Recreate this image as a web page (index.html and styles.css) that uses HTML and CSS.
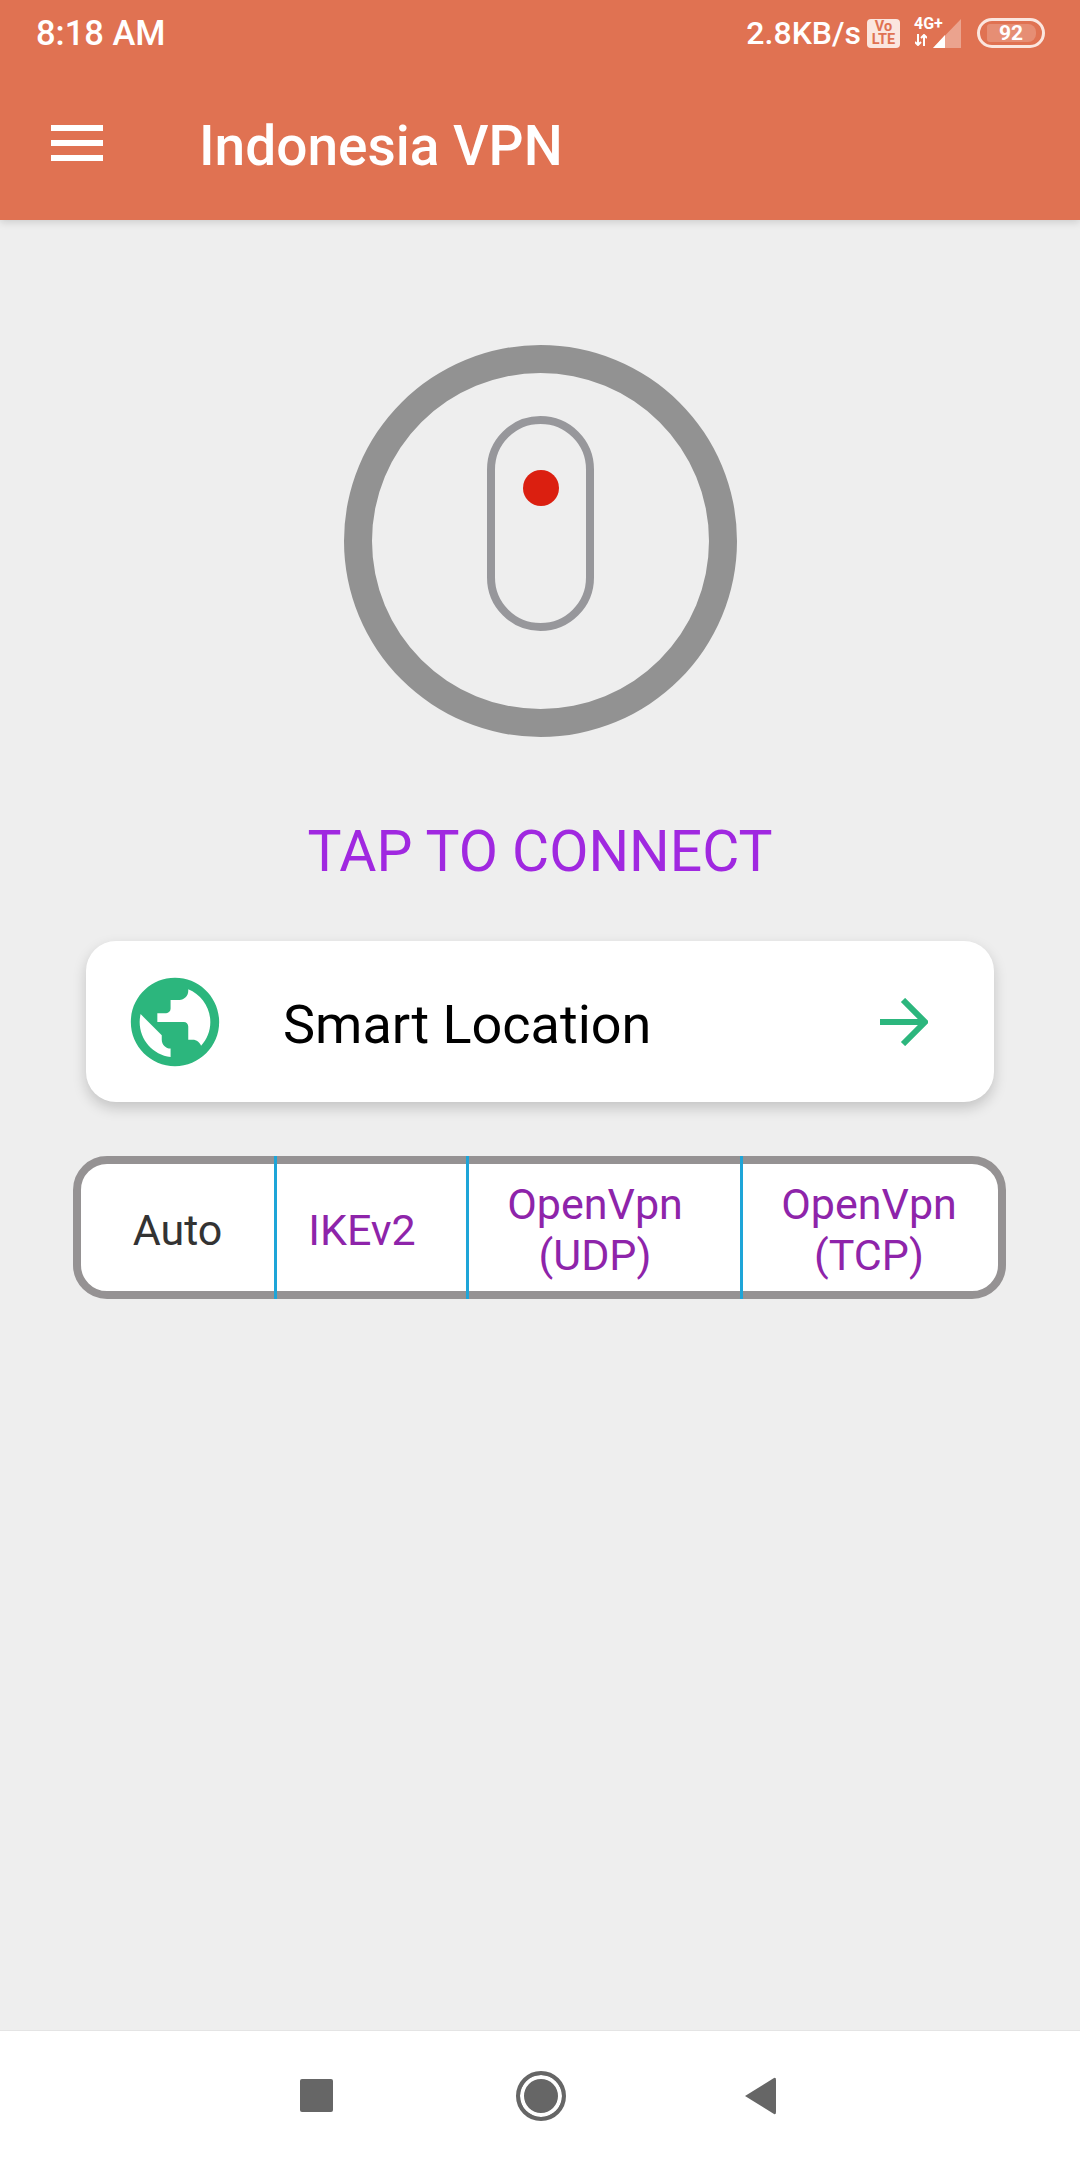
FILE: index.html
```html
<!DOCTYPE html>
<html lang="en">
<head>
  <meta charset="UTF-8">
  <meta name="viewport" content="width=device-width, initial-scale=1.0">
  <title>Indonesia VPN</title>
  <link rel="stylesheet" href="styles.css">
</head>
<body>
  <div class="app">

    <!-- Status bar and toolbar -->
    <header class="topbar">
      <div class="status">
        <span class="clock">8:18 AM</span>
        <div class="status-right">
          <span class="speed">2.8KB/s</span>
          <span class="volte">Vo<br>LTE</span>
          <div class="network">
            <span class="net-type">4G+</span>
            <svg class="net-arrows" width="12" height="12" viewBox="0 0 12 12">
              <path d="M3 0V11M0 8L3 11L6 8M9 12V1M6 4L9 1L12 4" fill="none" stroke="#fff" stroke-width="2"/>
            </svg>
            <svg class="signal" width="28" height="29" viewBox="0 0 28 29">
              <path d="M28 0V29H0Z" fill="#fff" opacity="0.35"/>
              <path d="M12 16V29H0Z" fill="#fff"/>
            </svg>
          </div>
          <div class="battery">
            <span class="battery-fill"></span>
            <span class="battery-level">92</span>
          </div>
        </div>
      </div>
      <div class="toolbar">
        <div class="burger"><span></span><span></span><span></span></div>
        <h1 class="title">Indonesia VPN</h1>
      </div>
    </header>

    <main class="content">
      <!-- Connect button -->
      <div class="power">
        <div class="pill"><span class="pill-dot"></span></div>
      </div>
      <p class="connect-text">TAP TO CONNECT</p>

      <div class="location">
        <svg class="globe" width="106" height="106" viewBox="0 0 24 24">
          <path fill="#2cb67d" d="M12 2C6.48 2 2 6.48 2 12s4.48 10 10 10 10-4.48 10-10S17.52 2 12 2zm-1 17.93c-3.95-.49-7-3.85-7-7.93 0-.62.08-1.21.21-1.79L9 15v1c0 1.1.9 2 2 2v1.93zm6.9-2.54c-.26-.81-1-1.39-1.9-1.39h-1v-3c0-.55-.45-1-1-1H8v-2h2c.55 0 1-.45 1-1V7h2c1.1 0 2-.9 2-2v-.41c2.93 1.19 5 4.06 5 7.41 0 2.08-.8 3.97-2.1 5.39z"/>
        </svg>
        <span class="location-name">Smart Location</span>
        <svg class="arrow" width="48" height="48" viewBox="0 0 48 48">
          <path d="M0 24H45M23 2L45 24L23 46" fill="none" stroke="#2cb67d" stroke-width="6"/>
        </svg>
      </div>

      <!-- Protocol selector -->
      <div class="protocols">
        <div class="proto proto-active">Auto</div>
        <div class="proto proto-shift">IKEv2</div>
        <div class="proto proto-shift">OpenVpn<br>(UDP)</div>
        <div class="proto">OpenVpn<br>(TCP)</div>
      </div>
    </main>

    <!-- Android navigation bar -->
    <nav class="navbar">
      <span class="nav-square"></span>
      <span class="nav-home"></span>
      <svg class="nav-back" width="32" height="40" viewBox="0 0 32 40">
        <path d="M1 20L30 2Q32 1 32 4V36Q32 39 30 38Z" fill="#666"/>
      </svg>
    </nav>
  </div>
</body>
</html>
```
FILE: styles.css
```css
* {
  box-sizing: border-box;
}
body {
  margin: 0;
  background-color: #eee;
  font-family: Roboto, "Noto Sans", sans-serif;
}
.app {
  display: flex;
  flex-direction: column;
  height: 2160px;
}

/* Top bar */
.topbar {
  height: 220px;
  background-color: #e07252;
  color: #fff;
  box-shadow: 0 2px 8px rgba(0, 0, 0, 0.15);
}
.status {
  display: flex;
  justify-content: space-between;
  align-items: center;
  height: 66px;
  padding: 0 35px 0 36px;
}
.clock {
  font-size: 34.5px;
  font-weight: 500;
}
.status-right {
  display: flex;
  align-items: center;
}
.speed {
  font-size: 32px;
  font-weight: 500;
}
.volte {
  width: 33px;
  height: 29px;
  margin-left: 6px;
  padding-top: 1px;
  border-radius: 4px;
  background-color: #fbe6df;
  color: #e07252;
  font-size: 14.5px;
  font-weight: 700;
  line-height: 13px;
  text-align: center;
}
.network {
  position: relative;
  width: 47px;
  height: 30px;
  margin-left: 14px;
}
.net-type {
  position: absolute;
  top: -4px;
  left: 0;
  font-size: 16px;
  font-weight: 700;
}
.net-arrows {
  position: absolute;
  top: 16px;
  left: 1px;
}
.signal {
  position: absolute;
  top: 1px;
  right: 0;
}
.battery {
  position: relative;
  display: flex;
  justify-content: center;
  align-items: center;
  width: 68px;
  height: 30px;
  margin-left: 16px;
  border: 3px solid #fbe6df;
  border-radius: 15px;
}
.battery-fill {
  position: absolute;
  top: 3px;
  bottom: 3px;
  left: 7px;
  right: 6px;
  border-radius: 3px 8px 8px 3px;
  background-color: rgba(255, 255, 255, 0.2);
}
.battery-level {
  position: relative;
  font-size: 21px;
  font-weight: 700;
}
.toolbar {
  display: flex;
  align-items: center;
  height: 154px;
  padding-left: 51px;
}
.burger {
  display: flex;
  flex-direction: column;
  gap: 9px;
  width: 52px;
}
.burger span {
  height: 6px;
  background-color: #fff;
}
.title {
  margin: 0 0 0 96px;
  padding-top: 5px;
  font-size: 55px;
  font-weight: 500;
}

/* Main area */
.content {
  flex: 1;
  display: flex;
  flex-direction: column;
  align-items: center;
  padding-top: 125px;
}
.power {
  display: flex;
  justify-content: center;
  align-items: center;
  width: 393px;
  height: 392px;
  border: 28px solid #929292;
  border-radius: 50%;
}
.pill {
  display: flex;
  justify-content: center;
  width: 107px;
  height: 215px;
  margin-bottom: 35px;
  padding-top: 46px;
  border: 8px solid #97979b;
  border-radius: 54px;
}
.pill-dot {
  width: 36px;
  height: 36px;
  margin-left: 1px;
  border-radius: 50%;
  background-color: #db1f10;
}
.connect-text {
  margin: 85px 0 59px;
  color: #a028e0;
  font-size: 57px;
  line-height: 60px;
}
.location {
  display: flex;
  align-items: center;
  width: 908px;
  height: 161px;
  padding: 0 66px 0 36px;
  border-radius: 30px;
  background-color: #fff;
  box-shadow: 0 6px 14px rgba(0, 0, 0, 0.18);
}
.location-name {
  flex: 1;
  margin-left: 55px;
  padding-top: 5px;
  color: #000;
  font-size: 54px;
}
.protocols {
  display: grid;
  grid-template-columns: 194px 192px 274px 1fr;
  width: 933px;
  height: 143px;
  margin-top: 54px;
  margin-right: 2px;
  border: 8px solid #959293;
  border-radius: 34px;
  background-color: #fff;
}
.proto {
  position: relative;
  display: flex;
  justify-content: center;
  align-items: center;
  padding-top: 5px;
  color: #8e24aa;
  font-size: 43px;
  line-height: 51px;
  text-align: center;
}
.proto + .proto::before {
  content: "";
  position: absolute;
  top: -8px;
  bottom: -8px;
  left: -1px;
  width: 3px;
  background-color: #1ea5d8;
}
.proto-active {
  color: #333;
}
.proto-shift {
  padding-right: 17px;
}

/* Bottom navigation */
.navbar {
  display: flex;
  align-items: center;
  height: 130px;
  padding: 0 304px 0 300px;
  justify-content: space-between;
  background-color: #fff;
  border-top: 1px solid #e4e4e4;
}
.nav-square {
  width: 33px;
  height: 33px;
  border-radius: 2px;
  background-color: #666;
}
.nav-home {
  width: 50px;
  height: 50px;
  margin-left: 5px;
  border: 4px solid #666;
  border-radius: 50%;
  background-color: #666;
  box-shadow: inset 0 0 0 4px #fff;
}
```
